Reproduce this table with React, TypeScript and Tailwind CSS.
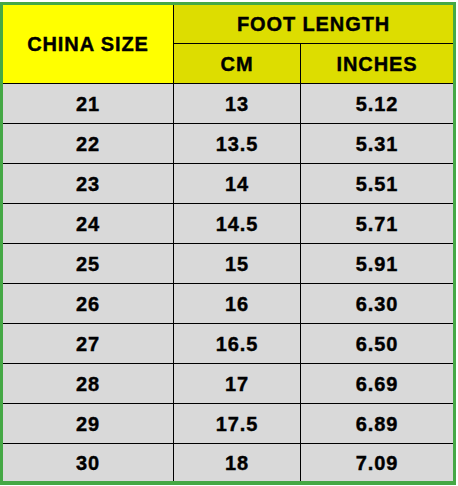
const rows: [string, string, string][] = [
  ["21", "13", "5.12"],
  ["22", "13.5", "5.31"],
  ["23", "14", "5.51"],
  ["24", "14.5", "5.71"],
  ["25", "15", "5.91"],
  ["26", "16", "6.30"],
  ["27", "16.5", "6.50"],
  ["28", "17", "6.69"],
  ["29", "17.5", "6.89"],
  ["30", "18", "7.09"],
];

const cell = "flex items-center justify-center";

export default function App() {
  return (
    <div className="h-[486px] w-[458px] bg-white pt-[2px] font-['Liberation_Sans',Arial,sans-serif] text-[20px] font-bold tracking-[0.9px] text-black [-webkit-text-stroke:0.4px_black]">
      <div className="w-[456px] border-x-[3px] border-t-[3px] border-b-[4px] border-[#45a845]">
        {/* header */}
        <div className="grid h-[79px] grid-cols-[171px_279px] border-b border-black">
          <div className={`${cell} border-r border-black bg-[#ffff00]`}>CHINA SIZE</div>
          <div className="grid grid-rows-[39px_39px] bg-[#dddd00]">
            <div className={`${cell} border-b border-black`}>FOOT LENGTH</div>
            <div className="grid grid-cols-[127px_152px]">
              <div className={`${cell} border-r border-black`}>CM</div>
              <div className={cell}>INCHES</div>
            </div>
          </div>
        </div>

        {/* body */}
        {rows.map(([size, cm, inches], i) => (
          <div
            key={size}
            className={`grid grid-cols-[171px_127px_152px] bg-[#d9d9d9] ${
              i === rows.length - 1 ? "h-[37px]" : "h-[40px] border-b border-black"
            }`}
          >
            <div className={`${cell} border-r border-black`}>{size}</div>
            <div className={`${cell} border-r border-black`}>{cm}</div>
            <div className={cell}>{inches}</div>
          </div>
        ))}
      </div>
    </div>
  );
}
